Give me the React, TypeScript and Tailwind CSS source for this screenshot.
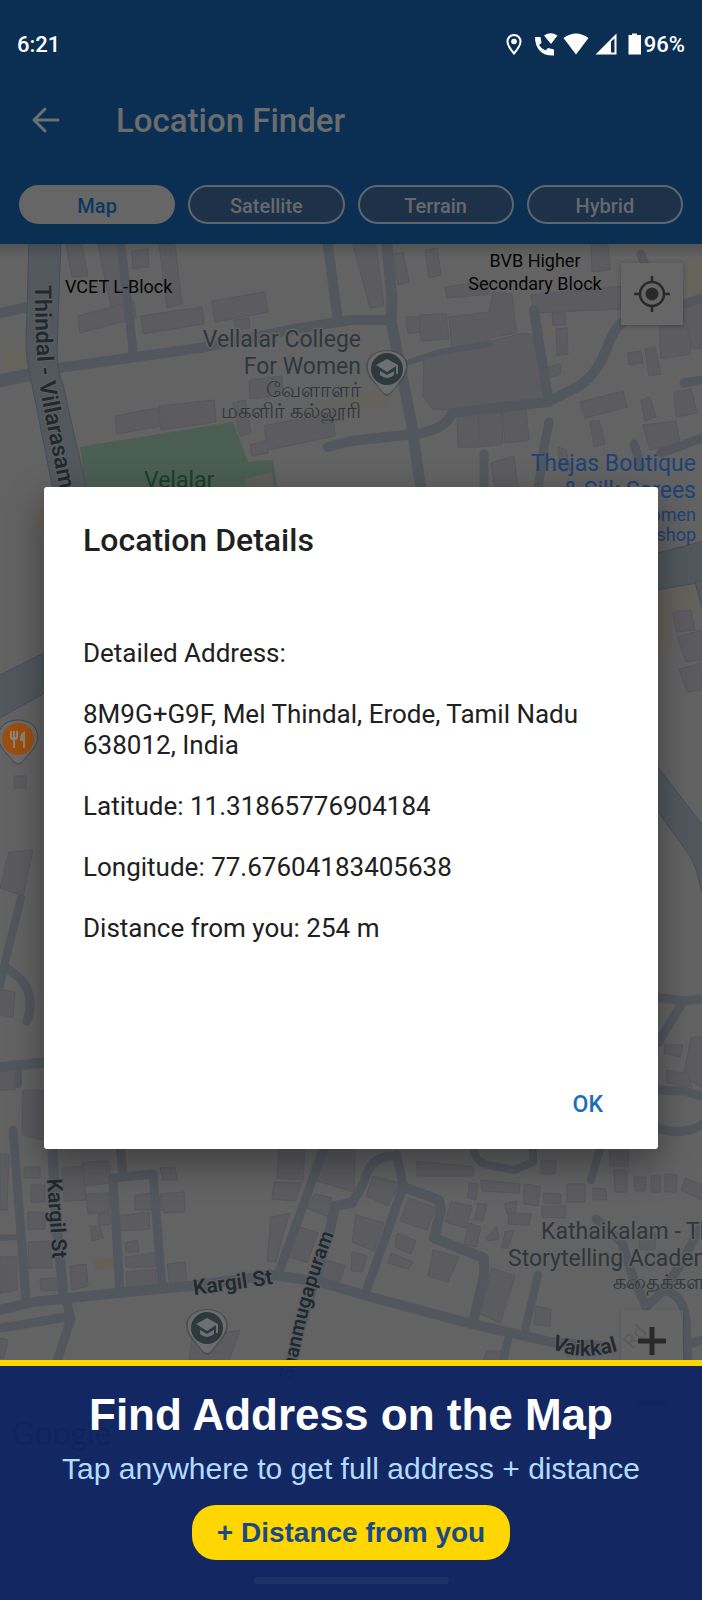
import React, { useState } from "react";

const MAP_TYPES = ["Map", "Satellite", "Terrain", "Hybrid"];

const BUILDINGS = [
  "66,245 82,245 88,276 72,277",
  "98,245 118,245 132,312 112,312",
  "132,251 148,249 149,267 133,269",
  "159,245 175,245 182,304 167,308",
  "78,316 134,301 136,318 80,333",
  "141,316 202,307 204,324 143,334",
  "212,301 265,292 268,312 215,322",
  "234,320 249,318 250,328 236,330",
  "249,380 282,376 283,395 250,399",
  "115,416 158,408 160,426 117,434",
  "159,406 214,400 216,422 161,430",
  "264,426 333,412 335,436 268,450",
  "233,403 245,400 251,433 240,436",
  "250,445 267,440 268,453 252,456",
  "353,245 376,245 384,306 370,308",
  "393,254 403,252 409,282 398,285",
  "425,250 437,248 441,275 429,278",
  "445,287 488,281 489,294 447,298",
  "531,295 635,285 640,308 534,313",
  "591,245 608,245 610,270 592,272",
  "406,317 420,317 421,332 408,333",
  "419,315 446,314 449,339 421,341",
  "449,317 489,312 493,292 512,294 516,333 490,338 489,345 452,348",
  "424,358 524,333 542,336 551,404 470,411 433,409 423,397",
  "457,416 478,412 480,447 458,447",
  "478,410 501,409 503,444 480,447",
  "502,410 526,410 529,440 505,443",
  "556,329 567,328 568,354 557,356",
  "549,367 560,364 561,374 551,377",
  "552,313 565,313 565,325 553,325",
  "580,402 623,391 627,407 585,418",
  "641,400 650,397 656,417 645,421",
  "590,422 599,420 605,444 594,447",
  "643,425 676,421 680,443 650,450",
  "628,353 641,351 643,363 629,365",
  "645,349 655,347 661,374 649,376",
  "659,324 695,312 690,354 661,359",
  "674,392 691,389 697,413 676,417",
  "682,308 702,302 702,348 693,349",
  "491,463 514,456 518,487 495,487",
  "558,447 566,450 570,470 561,472",
  "673,612 691,610 695,630 676,632",
  "677,637 702,630 702,660 686,662",
  "679,669 702,663 702,690 687,692",
  "14,776 26,776 26,788 14,788",
  "9,852 33,850 23,896 0,888",
  "0,989 15,992 13,1017 0,1015",
  "0,1070 16,1070 15,1090 0,1090",
  "23,1090 43,1090 43,1140 22,1135",
  "691,1038 702,1036 702,1088 683,1076",
  "665,1045 683,1045 680,1057 664,1053",
  "666,1070 688,1074 692,1087 667,1083",
  "0,1154 9,1154 7,1210 0,1210",
  "24,1167 40,1167 40,1178 24,1178",
  "31,1185 45,1185 45,1202 31,1202",
  "62,1168 83,1166 86,1200 64,1201",
  "82,1162 109,1161 111,1183 85,1186",
  "86,1194 109,1193 109,1212 88,1214",
  "28,1212 45,1212 45,1229 28,1229",
  "98,1214 110,1214 110,1225 99,1225",
  "90,1226 100,1227 103,1238 92,1241",
  "119,1216 149,1212 150,1229 121,1231",
  "135,1195 158,1192 162,1210 135,1210",
  "160,1194 184,1192 185,1212 164,1213",
  "160,1168 175,1167 177,1180 163,1180",
  "125,1243 137,1240 139,1252 126,1252",
  "125,1257 154,1253 155,1267 126,1267",
  "126,1272 155,1269 156,1286 127,1288",
  "167,1264 185,1262 187,1284 170,1285",
  "28,1242 50,1241 52,1268 29,1268",
  "0,1257 17,1257 17,1290 0,1293",
  "40,1279 56,1278 57,1290 41,1291",
  "70,1266 86,1264 88,1286 72,1290",
  "279,1150 305,1150 303,1180 277,1178",
  "274,1182 301,1183 296,1201 272,1199",
  "271,1217 290,1213 284,1230 276,1262 267,1261",
  "315,1194 332,1198 328,1217 307,1208",
  "298,1226 318,1233 307,1263 287,1256",
  "323,1259 345,1266 338,1286 319,1275",
  "326,1150 355,1150 354,1192 317,1181",
  "192,1338 240,1330 229,1360 189,1360",
  "373,1176 400,1183 388,1206 366,1196",
  "409,1198 436,1208 427,1230 400,1221",
  "356,1215 384,1223 374,1251 352,1242",
  "352,1252 367,1256 362,1272 351,1271",
  "397,1233 416,1241 411,1254 395,1247",
  "391,1253 413,1262 408,1269 388,1263",
  "433,1250 459,1257 448,1282 428,1276",
  "451,1202 472,1206 466,1228 445,1222",
  "478,1203 487,1205 483,1221 475,1219",
  "469,1223 481,1227 476,1247 464,1244",
  "492,1268 515,1276 500,1323 480,1314",
  "417,1161 473,1167 473,1176 417,1176",
  "469,1183 478,1184 476,1200 468,1198",
  "481,1180 520,1184 519,1193 482,1191",
  "524,1184 540,1186 538,1206 524,1204",
  "541,1160 556,1161 555,1174 541,1174",
  "567,1184 585,1184 585,1202 567,1202",
  "543,1193 561,1194 560,1204 544,1203",
  "542,1206 566,1206 565,1218 542,1217",
  "509,1213 531,1214 529,1225 508,1224",
  "505,1203 517,1201 515,1214 507,1214",
  "486,1238 497,1226 499,1239 488,1241",
  "505,1232 514,1230 508,1248 502,1248",
  "593,1188 606,1189 607,1200 593,1200",
  "614,1170 627,1171 627,1192 615,1192",
  "634,1177 646,1177 645,1191 635,1191",
  "651,1176 661,1176 660,1192 651,1192",
  "665,1174 677,1175 676,1192 665,1192",
  "685,1178 702,1185 702,1200 681,1190",
  "536,1306 551,1309 550,1326 534,1325",
  "609,1151 629,1151 628,1167 610,1166",
  "639,1238 655,1232 655,1250 640,1250",
  "487,1351 503,1351 501,1360 483,1360",
  "0,1338 8,1340 4,1358 0,1358",
];

const ROADS: [string, number][] = [
  ["M0 381L32 374", 13],
  ["M0 313L27 307", 10],
  ["M58 368L200 348L300 328L351 320L391 320", 10],
  ["M121 245L130 322L133 352", 9],
  ["M328 245L338 322", 10],
  ["M328 447L351 441L414 434Q446 430 452 413L548 402L581 385Q598 372 606 350T623 322", 10],
  ["M387 245L392 300L391 320L398 357L411 420L421 490", 11],
  ["M406 363L440 352L489 344", 6],
  ["M534 310L540 350L549 402", 10],
  ["M549 422L544 447L538 490", 9],
  ["M484 454V490", 9],
  ["M634 444L641 466", 9],
  ["M684 383L702 380", 9],
  ["M661 453L702 438", 9],
  ["M641 254L646 268", 9],
  ["M681 305L702 298", 9],
  ["M21 898L5 962L0 985", 8],
  ["M5 967Q22 978 27 988Q33 1004 27 1021", 9],
  ["M0 1067L50 1062", 10],
  ["M18 1070V1084", 8],
  ["M655 997L684 1001L702 999", 9],
  ["M682 1003L658 1043", 9],
  ["M655 1090L684 1091L704 1097", 9],
  ["M655 1127Q684 1138 704 1123", 9],
  ["M13 1130L20 1220L26 1300", 9],
  ["M52 1145L57 1230L64 1300", 10],
  ["M66 1300L71 1318L57 1362", 9],
  ["M0 1310L33 1302L117 1293L190 1286L273 1275L320 1282L371 1297L468 1323L551 1342L600 1346", 10],
  ["M0 1328L67 1317", 9],
  ["M0 1238L21 1237", 6],
  ["M120 1145L123 1174", 9],
  ["M120 1292L113 1178L153 1174L162 1287", 9],
  ["M325 1145L278 1275", 9],
  ["M352 1203L335 1206L330 1230L290 1362", 10],
  ["M351 1203Q362 1190 366 1175Q374 1155 395 1156", 9],
  ["M397 1155L403 1187L366 1292", 9],
  ["M403 1187L439 1200L441 1210L434 1238L484 1258L484 1275L473 1323", 10],
  ["M473 1145Q474 1162 488 1165L514 1170L533 1162V1145", 8],
  ["M600 1148L591 1180", 8],
  ["M538 1275L524 1335", 8],
  ["M508 1340L503 1362", 8],
  ["M596 1219L622 1243L633 1277L646 1307L664 1290Q683 1294 686 1320L688 1362", 9],
  ["M702 1225L680 1265L664 1290", 9],
  ["M690 1344L702 1340", 9],
];

function SchoolPin({ x, y }: { x: number; y: number }) {
  return (
    <g transform={`translate(${x} ${y})`}>
      <path d="M0 27C-4 27-7 20-13 14C-30-4-17-19 0-19S30-4 13 14C7 20 4 27 0 27Z" fill="#3b3b3b" opacity=".5" />
      <path d="M0 25C-4 25-7 19-12 13C-27-4-16-18 0-18S27-4 12 13C7 19 4 25 0 25Z" fill="#6b6c6c" />
      <circle r="16" fill="#2d393d" />
      <path d="M0-10L-11-4L0 3L9-3V5H11V-4Z" fill="#6d7072" />
      <path d="M-7 2V6Q0 12 7 6V2L0 6Z" fill="#6d7072" />
    </g>
  );
}

function MapCanvas() {
  return (
    <svg
      className="absolute inset-0 h-full w-full"
      viewBox="0 244 702 1356"
      preserveAspectRatio="xMidYMin slice"
      role="img"
      aria-label="Street map"
      fontFamily="Roboto, 'Noto Sans', sans-serif"
    >
      <defs>
        <linearGradient id="edge" x1="0" y1="0" x2="0" y2="1">
          <stop offset="0" stopColor="#000" stopOpacity=".16" />
          <stop offset="1" stopColor="#000" stopOpacity="0" />
        </linearGradient>
        <path id="thindal" d="M35 285C35 350 38 380 44 410L68 530" />
        <path id="shan" d="M285 1407L299 1353Q311 1292 334 1234" />
        <path id="vaikkal" d="M551 1348Q585 1365 634 1345" />
      </defs>
      <rect y="244" width="702" height="1356" fill="#636363" />

      <path d="M80 447L233 422L248 462L273 460L278 490H86Z" fill="#4b5e53" />
      <path d="M245 479L272 472L274 490H245Z" fill="#5f5e5b" />
      <g fill="#66635a">
        <path d="M3 351L34 347L37 366L5 370Z" />
        <path d="M313 402L390 388V406L316 414Z" opacity=".6" />
        <path d="M683 263L702 255V298L688 300Z" />
        <path d="M547 322L554 326V334L545 333Z" />
        <path d="M660 590L692 586L697 612L675 614L671 648L660 644Z" opacity=".7" />
        <path d="M94 1261L113 1257L115 1267L96 1271Z" fill="#675f55" />
        <path d="M34 508L43 503V528L33 526Z" />
      </g>
      <g fill="#5c5b60" stroke="#57565b" strokeWidth="1">
        {BUILDINGS.map((points) => (
          <polygon key={points} points={points} />
        ))}
      </g>
      <g fill="none" stroke="#52575e" strokeLinecap="round" strokeLinejoin="round">
        {ROADS.map(([d, width]) => (
          <path key={d} d={d} strokeWidth={width} />
        ))}
      </g>
      <g fill="#52585e" stroke="#474e56" strokeWidth="1">
        <path d="M29 240L26 345Q26 360 32 385L54 495H88L63 385Q57 370 57 350L61 240Z" />
        <path d="M-2 676L50 650V690L-2 719Z" />
        <path d="M650 555L704 541V582L650 591Z" />
        <path d="M695 582L704 580V615Z" />
        <path d="M650 757L704 827V900Q696 865 690 856L664 820L650 800Z" />
      </g>
      <rect y="244" width="702" height="14" fill="url(#edge)" />

      <g fontSize="18" fill="#060606">
        <text x="65" y="293">VCET L-Block</text>
        <g textAnchor="middle">
          <text x="535" y="267">BVB Higher</text>
          <text x="535" y="290">Secondary Block</text>
        </g>
      </g>
      <g fill="#2e373d" stroke="#636363" strokeWidth="3" paintOrder="stroke" strokeLinejoin="round">
        <g fontSize="23" textAnchor="end">
          <text x="361" y="347">Vellalar College</text>
          <text x="361" y="374">For Women</text>
          <g fontSize="21" strokeWidth="1">
            <text x="361" y="397">வேளாளர்</text>
            <text x="361" y="418">மகளிர் கல்லூரி</text>
          </g>
        </g>
        <g fontSize="23">
          <text x="541" y="1239">Kathaikalam - The</text>
          <text x="508" y="1266">Storytelling Academy</text>
          <text x="613" y="1289" fontSize="21" strokeWidth="1">கதைக்களம்</text>
        </g>
      </g>
      <text x="144" y="488" fontSize="23" fill="#173f2c">Velalar</text>
      <g fill="#1d4276" textAnchor="end" fontSize="23">
        <text x="696" y="471">Thejas Boutique</text>
        <text x="696" y="498">&amp; Silk Sarees</text>
        <text x="696" y="521" fontSize="18">Women</text>
        <text x="696" y="541" fontSize="18">shop</text>
      </g>
      <g fill="#22282e" fontWeight="600" fontSize="21" stroke="#5c6064" strokeWidth="2" paintOrder="stroke">
        <text fontSize="23"><textPath href="#thindal">Thindal - Villarasampatti</textPath></text>
        <text transform="translate(47 1179) rotate(86)">Kargil St</text>
        <text transform="translate(194 1295) rotate(-8)">Kargil St</text>
        <text textAnchor="end" fontSize="20"><textPath href="#shan" startOffset="100%">Shanmugapuram</textPath></text>
        <text><textPath href="#vaikkal">Vaikkal</textPath></text>
      </g>
      <text transform="translate(632 1350) rotate(-48)" fontSize="20" fill="#42464a">Rd</text>
      <text x="11" y="1445" fontSize="32" fill="#1c1c1c" fontFamily="Lato, sans-serif">Google</text>

      <SchoolPin x={387} y={369} />
      <SchoolPin x={207} y={1328} />
      <g transform="translate(18 739)">
        <path d="M0 25C-4 25-7 19-12 14C-28-3-17-19 0-19S28-3 12 14C7 19 4 25 0 25Z" fill="#6b6b6b" stroke="#454545" strokeWidth="1" />
        <circle r="16" fill="#9c4f11" />
        <path d="M-8-8V-2Q-8 1-5 1V9H-3V1Q0 1 0-2V-8H-2V-2H-3V-8H-5V-2H-6V-8ZM7-8Q2-6 2 0V2H5V9H7Z" fill="#8f8578" />
      </g>
    </svg>
  );
}

function StatusIcons() {
  return (
    <svg width="138" height="26" viewBox="504 30 138 26" fill="#fff" aria-hidden="true">
      <path d="M512 34C508 34 505.500 37 505.500 40.500C505.500 45 512 52.500 512 52.500S518.500 45 518.500 40.500C518.500 37 516 34 512 34Z" fill="none" stroke="#fff" strokeWidth="2" />
      <circle cx="512" cy="40.500" r="2.800" />
      <path d="M533 36H538.500L539.500 42L537 44Q539.500 48 543.500 49.500L546 47L552 48.500V54.500Q543 55 538 50T533 36Z" />
      <path d="M542 34.500Q548.500 30 555.500 34.500L549 43Z" />
      <path d="M561.500 37Q574 28 586.500 37L574 53.500Z" />
      <path fillRule="evenodd" d="M614.500 32.500V53.500H593.500ZM609 40.500V51.500H612.500V37.500Z" />
      <path d="M630 32.500H635V34H639V53.500H626.500V34H630Z" />
    </svg>
  );
}

export default function App() {
  const [mapType, setMapType] = useState("Map");
  const [open, setOpen] = useState(true);

  return (
    <div className="relative flex min-h-screen flex-col overflow-hidden bg-[#636363] font-[Roboto,'Noto_Sans',sans-serif]">
      <header className="bg-[#0a2f53]">
        <div className="flex h-[88px] items-center justify-between pr-[17px] pl-[17px] text-[22px] font-medium text-white">
          <span>6:21</span>
          <div className="flex items-center">
            <StatusIcons />
            <span>96%</span>
          </div>
        </div>
        <div className="flex h-[66px] items-center gap-[54px] pl-[30px]">
          <button type="button" aria-label="Back" className="text-[#6b6f72]">
            <svg width="32" height="32" viewBox="0 0 32 32" fill="none" stroke="currentColor" strokeWidth="3" strokeLinecap="round" strokeLinejoin="round">
              <path d="M28 15H4M15 4L4 15L15 26" />
            </svg>
          </button>
          <h1 className="text-[33px] font-medium text-[#6b6c6e]">Location Finder</h1>
        </div>
        <nav className="grid grid-cols-4 gap-[13px] px-[19px] pt-[31px] pb-[20px]">
          {MAP_TYPES.map((type) => (
            <button
              key={type}
              type="button"
              aria-pressed={mapType === type}
              onClick={() => setMapType(type)}
              className={
                mapType === type
                  ? "h-[39px] rounded-full border-2 border-[#666666] bg-[#666666] pt-[2px] text-[20px] leading-none font-medium text-[#0c3763]"
                  : "h-[39px] rounded-full border-2 border-[#5d666e] bg-[#1d3149] pt-[2px] text-[20px] leading-none font-medium text-[#66696c]"
              }
            >
              {type}
            </button>
          ))}
        </nav>
      </header>

      <main className="relative flex-1 overflow-hidden">
        <MapCanvas />
        <button
          type="button"
          aria-label="My location"
          className="absolute top-[19px] right-[19px] flex size-[62px] items-center justify-center bg-[#666666] text-[#292929] shadow-[0_1px_4px_rgba(0,0,0,0.3)]"
        >
          <svg width="36" height="36" viewBox="0 0 36 36" fill="none" stroke="currentColor" strokeWidth="2.500">
            <circle cx="18" cy="18" r="12" />
            <circle cx="18" cy="18" r="6.500" fill="currentColor" stroke="none" />
            <path d="M18 0V6M18 30V36M0 18H6M30 18H36" />
          </svg>
        </button>
        <div className="absolute top-[1066px] right-[19px] flex flex-col bg-[#686868]/60 text-[#292929] shadow-[0_1px_3px_rgba(0,0,0,0.2)]">
          <button type="button" aria-label="Zoom in" className="flex size-[62px] items-center justify-center">
            <svg width="28" height="28" viewBox="0 0 28 28" stroke="currentColor" strokeWidth="5">
              <path d="M14 0V28M0 14H28" />
            </svg>
          </button>
          <button type="button" aria-label="Zoom out" className="flex size-[62px] items-center justify-center">
            <svg width="28" height="28" viewBox="0 0 28 28" stroke="currentColor" strokeWidth="5">
              <path d="M0 14H28" />
            </svg>
          </button>
        </div>
      </main>

      {open && (
        <div className="absolute inset-0 flex items-center justify-center px-[44px] pt-[36px]">
          <section
            role="dialog"
            aria-labelledby="dialog-title"
            className="flex min-h-[662px] w-full flex-col rounded-[3px] bg-white px-[39px] pt-[34px] pb-[23px] text-[#202020] shadow-[0_14px_36px_2px_rgba(0,0,0,0.36)]"
          >
            <h2 id="dialog-title" className="text-[32px] leading-[38px] font-medium">
              Location Details
            </h2>
            <div className="flex flex-col gap-[30px] pt-[79px] text-[26px] leading-[31px]">
              <p>Detailed Address:</p>
              <p>8M9G+G9F, Mel Thindal, Erode, Tamil Nadu 638012, India</p>
              <p>Latitude: 11.31865776904184</p>
              <p>Longitude: 77.67604183405638</p>
              <p>Distance from you: 254 m</p>
            </div>
            <button
              type="button"
              onClick={() => setOpen(false)}
              className="mt-auto self-end px-[16px] py-[8px] text-[23px] leading-[26px] font-medium text-[#1c6bbd]"
            >
              OK
            </button>
          </section>
        </div>
      )}

      <footer className="absolute inset-x-0 bottom-0 flex flex-col items-center border-t-[6px] border-[#ffd600] bg-[#0f2562]/95 bg-clip-padding px-6 pt-[24px] pb-[16px] text-center font-['Liberation_Sans',Arial,sans-serif]">
        <h2 className="text-[44px] leading-[50px] font-bold text-white">Find Address on the Map</h2>
        <p className="pt-[12px] text-[30px] leading-[34px] text-[#b3dbff]">Tap anywhere to get full address + distance</p>
        <button type="button" className="mt-[19px] h-[55px] rounded-[24px] bg-[#ffd600] px-[25px] text-[28px] font-bold text-[#1a4a84]">
          + Distance from you
        </button>
        <div className="mt-[17px] h-[7px] w-[195px] rounded-full bg-[#1d316a]" />
      </footer>
    </div>
  );
}
